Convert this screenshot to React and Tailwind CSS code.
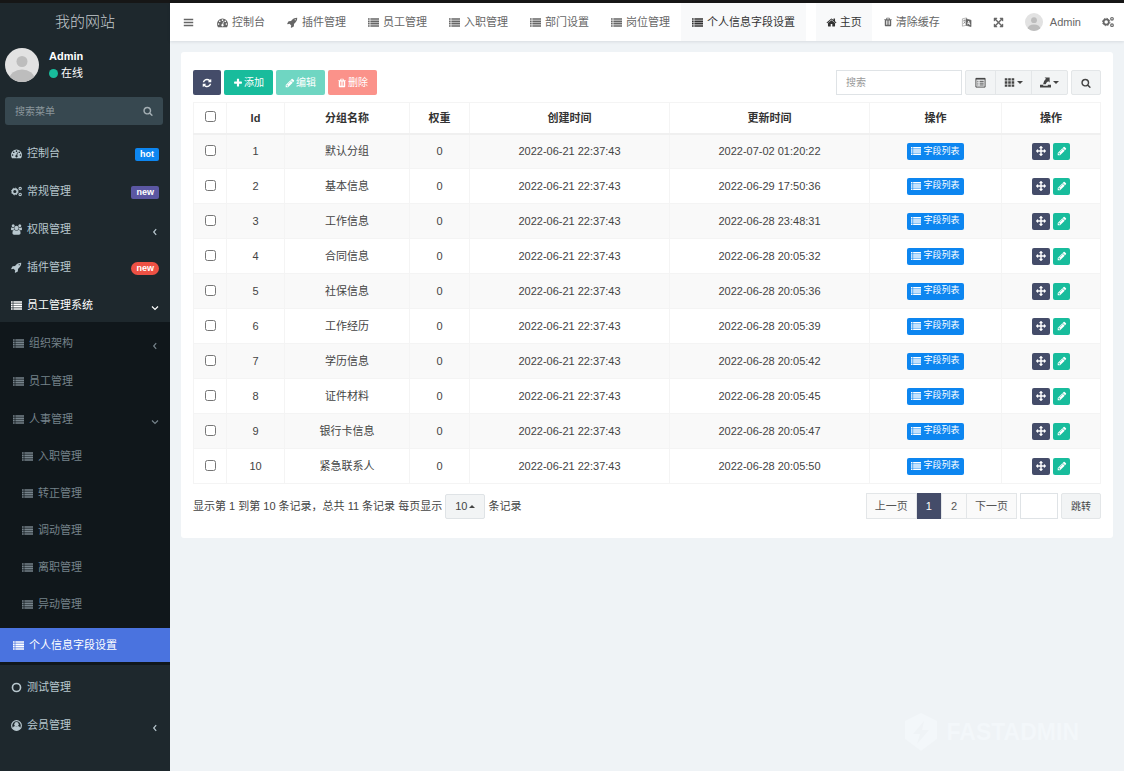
import { useState } from "react";

const PATHS = {
  dashboard:
    "M384 1152q0-53-37.5-90.5t-90.5-37.5-90.5 37.5-37.5 90.5 37.5 90.5 90.5 37.5 90.5-37.5 37.5-90.5zm192-448q0-53-37.5-90.5t-90.5-37.5-90.5 37.5-37.5 90.5 37.5 90.5 90.5 37.5 90.5-37.5 37.5-90.5zm428 481l101-382q6-26-7.5-48.5t-38.5-29.5-48 6.5-30 39.5l-101 382q-60 5-107 43.5t-63 98.5q-20 77 20 146t117 89 146-20 89-117q16-60-6-117t-72-91zm660-33q0-53-37.5-90.5t-90.5-37.5-90.5 37.5-37.5 90.5 37.5 90.5 90.5 37.5 90.5-37.5 37.5-90.5zm-640-640q0-53-37.5-90.5t-90.5-37.5-90.5 37.5-37.5 90.5 37.5 90.5 90.5 37.5 90.5-37.5 37.5-90.5zm448 192q0-53-37.5-90.5t-90.5-37.5-90.5 37.5-37.5 90.5 37.5 90.5 90.5 37.5 90.5-37.5 37.5-90.5zm320 448q0 261-141 483-19 29-54 29h-1402q-35 0-54-29-141-221-141-483 0-182 71-348t191-286 286-191 348-71 348 71 286 191 191 286 71 348z",
  rocket:
    "M1440 448q0-40-28-68t-68-28-68 28-28 68 28 68 68 28 68-28 28-68zm224-288q0 249-75.5 430.5t-253.5 360.5q-81 80-195 176l-20 379q-2 16-16 26l-384 224q-7 4-16 4-12 0-23-9l-64-64q-13-14-8-32l85-276-281-281-276 85q-3 1-9 1-14 0-23-9l-64-64q-17-19-5-39l224-384q10-14 26-16l379-20q96-114 176-195 188-187 358-258t431-71q14 0 24 9.5t10 22.5z",
  list: "M0 192h272v272H0zM384 192h1408v272H384zM0 572h272v272H0zM384 572h1408v272H384zM0 952h272v272H0zM384 952h1408v272H384zM0 1332h272v272H0zM384 1332h1408v272H384z",
  bars: "M128 280h1536v256H128zM128 768h1536v256H128zM128 1256h1536v256H128z",
  pencil:
    "M491 1536l91-91-235-235-91 91v107h128v128h107zm523-928q0-22-22-22-10 0-17 7l-542 542q-7 7-7 17 0 22 22 22 10 0 17-7l542-542q7-7 7-17zm-54-192l416 416-832 832h-416v-416zm683 96q0 53-37 90l-166 166-416-416 166-165q36-38 90-38 53 0 91 38l235 234q37 39 37 91z",
  plus: "M1600 736v192q0 40-28 68t-68 28h-416v416q0 40-28 68t-68 28h-192q-40 0-68-28t-28-68v-416h-416q-40 0-68-28t-28-68v-192q0-40 28-68t68-28h416v-416q0-40 28-68t68-28h192q40 0 68 28t28 68v416h416q40 0 68 28t28 68z",
  refresh:
    "M1639 1056q0 5-1 7-64 268-268 434.5t-478 166.5q-146 0-282.5-55t-243.5-157l-129 129q-19 19-45 19t-45-19-19-45v-448q0-26 19-45t45-19h448q26 0 45 19t19 45-19 45l-137 137q71 66 161 102t187 36q134 0 250-65t186-179q11-17 53-117 8-23 30-23h192q13 0 22.5 9.5t9.5 22.5zm25-800v448q0 26-19 45t-45 19h-448q-26 0-45-19t-19-45 19-45l138-138q-148-137-349-137-134 0-250 65t-186 179q-11 17-53 117-8 23-30 23h-199q-13 0-22.5-9.5t-9.5-22.5v-7q65-268 270-434.5t480-166.5q146 0 284 55.5t245 156.5l130-129q19-19 45-19t45 19 19 45z",
  search:
    "M1216 832q0-185-131.5-316.5t-316.5-131.5-316.5 131.5-131.5 316.5 131.5 316.5 316.5 131.5 316.5-131.5 131.5-316.5zm512 832q0 52-38 90t-90 38q-54 0-90-38l-343-342q-179 124-399 124-143 0-273.5-55.5t-225-150-150-225-55.5-273.5 55.5-273.5 150-225 225-150 273.5-55.5 273.5 55.5 225 150 150 225 55.5 273.5q0 220-124 399l343 343q37 37 37 90z",
  home: "M1472 992v480q0 26-19 45t-45 19h-384v-384h-256v384h-384q-26 0-45-19t-19-45v-480q0-1 .5-3t.5-3l575-474 575 474q1 2 1 6zm223-69l-62 74q-8 9-21 11h-3q-13 0-21-7l-692-577-692 577q-12 8-24 7-13-2-21-11l-62-74q-8-10-7-23.5t11-21.5l719-599q32-26 76-26t76 26l244 204v-195q0-14 9-23t23-9h192q14 0 23 9t9 23v408l219 182q10 8 11 21.5t-7 23.5z",
  trash:
    "M704 1376v-704q0-14-9-23t-23-9h-64q-14 0-23 9t-9 23v704q0 14 9 23t23 9h64q14 0 23-9t9-23zm256 0v-704q0-14-9-23t-23-9h-64q-14 0-23 9t-9 23v704q0 14 9 23t23 9h64q14 0 23-9t9-23zm256 0v-704q0-14-9-23t-23-9h-64q-14 0-23 9t-9 23v704q0 14 9 23t23 9h64q14 0 23-9t9-23zm-544-992h448l-48-117q-7-9-17-11h-317q-10 2-17 11zm928 32v64q0 14-9 23t-23 9h-96v948q0 83-47 143.5t-113 60.5h-832q-66 0-113-58.5t-47-141.5v-952h-96q-14 0-23-9t-9-23v-64q0-14 9-23t23-9h309l70-167q15-37 54-63t79-26h320q40 0 79 26t54 63l70 167h309q14 0 23 9t9 23z",
  arrows:
    "M1792 896q0 26-19 45l-256 256q-19 19-45 19t-45-19-19-45v-128h-384v384h128q26 0 45 19t19 45-19 45l-256 256q-19 19-45 19t-45-19l-256-256q-19-19-19-45t19-45 45-19h128v-384h-384v128q0 26-19 45t-45 19-45-19l-256-256q-19-19-19-45t19-45l256-256q19-19 45-19t45 19 19 45v128h384v-384h-128q-26 0-45-19t-19-45 19-45l256-256q19-19 45-19t45 19l256 256q19 19 19 45t-19 45-45 19h-128v384h384v-128q0-26 19-45t45-19 45 19l256 256q19 19 19 45z",
  expand:
    "M1411 541l-355 355 355 355 144-144q29-31 70-14 39 17 39 59v448q0 26-19 45t-45 19h-448q-42 0-59-40-17-39 14-69l144-144-355-355-355 355 144 144q31 30 14 69-17 40-59 40h-448q-26 0-45-19t-19-45v-448q0-42 40-59 39-17 69 14l144 144 355-355-355-355-144 144q-19 19-45 19-12 0-24-5-40-17-40-59v-448q0-26 19-45t45-19h448q42 0 59 40 17 39-14 69l-144 144 355 355 355-355-144-144q-31-30-14-69 17-40 59-40h448q26 0 45 19t19 45v448q0 42-39 59-13 5-25 5-26 0-45-19z",
  grid: "M128 192h420v380H128zM686 192h420v380H686zM1244 192h420v380h-420zM128 706h420v380H128zM686 706h420v380H686zM1244 706h420v380h-420zM128 1220h420v380H128zM686 1220h420v380H686zM1244 1220h420v380h-420z",
};

const Icon = ({ name, className = "size-[11px]" }) => {
  if (name === "cogs") {
    return (
      <svg viewBox="0 0 12 12" fill="none" stroke="currentColor" className={`shrink-0 ${className}`}>
        <circle cx="4.2" cy="6" r="2.6" strokeWidth="1.7" />
        <circle cx="4.2" cy="6" r="3.7" strokeWidth="1" strokeDasharray="1.45 1.45" />
        <circle cx="10" cy="2.800" r="1.300" strokeWidth="1.200" />
        <circle cx="10" cy="9.200" r="1.300" strokeWidth="1.200" />
      </svg>
    );
  }
  if (name === "group") {
    return (
      <svg viewBox="0 0 1920 1792" fill="currentColor" className={`shrink-0 ${className}`}>
        <path d="M593 896q-162 5-265 128h-134q-82 0-138-40.5t-56-118.5q0-353 124-353 6 0 43.5 21t97.500 42.500 119 21.500q67 0 133-23-5 37-5 66 0 139 81 256zm1071 637q0 120-73 189.500t-194 69.500h-874q-121 0-194-69.500t-73-189.500q0-53 3.500-103.500t14-109 26.500-108.500 43-97.500 62-81 85.500-53.500 111.500-20q10 0 43 21.500t73 48 107 48 135 21.500 135-21.500 107-48 73-48 43-21.500q61 0 111.500 20t85.500 53.500 62 81 43 97.500 26.500 108.500 14 109 3.500 103.500zm-1024-1277q0 106-75 181t-181 75-181-75-75-181 75-181 181-75 181 75 75 181zm704 384q0 159-112.500 271.500t-271.500 112.500-271.500-112.500-112.500-271.500 112.500-271.500 271.500-112.500 271.500 112.500 112.500 271.500zm576 225q0 78-56 118.500t-138 40.500h-134q-103-123-265-128 81-117 81-256 0-29-5-66 66 23 133 23 59 0 119-21.500t97.500-42.500 43.500-21q124 0 124 353zm-128-609q0 106-75 181t-181 75-181-75-75-181 75-181 181-75 181 75 75 181z" />
      </svg>
    );
  }
  if (name === "circle") {
    return (
      <svg viewBox="0 0 12 12" className={`shrink-0 ${className}`}>
        <circle cx="6" cy="6" r="4.4" fill="none" stroke="currentColor" strokeWidth="1.8" />
      </svg>
    );
  }
  if (name === "user") {
    return (
      <svg viewBox="0 0 12 12" className={`shrink-0 ${className}`}>
        <circle cx="6" cy="6" r="5.3" fill="none" stroke="currentColor" strokeWidth="1.3" />
        <circle cx="6" cy="4.7" r="2.4" fill="currentColor" />
        <path d="M1.800 9.200C2.300 7.400 3.600 6.700 4.400 6.600q1.600 1 3.200 0C8.400 6.700 9.700 7.400 10.200 9.200Q8.400 11.200 6 11.200T1.800 9.200z" fill="currentColor" />
      </svg>
    );
  }
  if (name === "language") {
    return (
      <svg viewBox="0 0 12 12" fill="none" stroke="currentColor" className={`shrink-0 ${className}`}>
        <path d="M6 9L1.500 10V2L6 1z" strokeWidth=".5" />
        <path d="M2.500 4l2.500-.5M3.600 2.800v1.200M4.700 4q-.6 2.500-2.200 3.600M2.800 5.200l2 1.600" strokeWidth=".6" />
        <path d="M5.500 2L11 3.500v7L5.500 9z" fill="currentColor" strokeWidth=".6" />
        <path d="M7.200 8l1.100-3.600 1.400 4.300M7.600 7l1.700.4" stroke="#fff" strokeWidth=".9" />
      </svg>
    );
  }
  if (name === "columns") {
    return (
      <svg viewBox="0 0 12 12" fill="none" stroke="currentColor" className={`shrink-0 ${className}`}>
        <path d="M1 1.500h10v9.500H1z" strokeWidth="1" />
        <path d="M1 2h10" strokeWidth="1.600" />
        <path d="M2.500 4.700h1.200M2.500 6.700h1.200M2.500 8.700h1.200M5 4.700h4.500M5 6.700h4.500M5 8.700h4.500" strokeWidth="1" />
      </svg>
    );
  }
  if (name === "export") {
    return (
      <svg viewBox="0 0 12 12" fill="currentColor" className={`shrink-0 ${className}`}>
        <path d="M0 8.500h3.500v1h5v-1H12v3H0z" />
        <path d="M5 .5h5.500V6L9 4.600Q6.800 5.800 6.300 8H3.400Q3.800 4.200 6.500 2z" />
      </svg>
    );
  }
  return (
    <svg viewBox="0 0 1792 1792" fill="currentColor" className={`shrink-0 ${className}`}>
      <path d={PATHS[name]} />
    </svg>
  );
};

const Caret = ({ up }) => (
  <svg viewBox="0 0 6 3" fill="currentColor" className="h-[3px] w-[6px] shrink-0">
    <path d={up ? "M0 3l3-3 3 3z" : "M0 0h6L3 3z"} />
  </svg>
);

const Chevron = ({ down }) => (
  <svg
    viewBox="0 0 8 8"
    fill="none"
    stroke="currentColor"
    strokeWidth="1.2"
    className="mt-[5px] ml-auto size-2 shrink-0"
  >
    <path d={down ? "M1 2.500l3 3 3-3" : "M5.200 1.200l-2.500 2.800 2.500 2.800"} />
  </svg>
);

const Avatar = ({ className }) => (
  <svg viewBox="0 0 34 34" className={`shrink-0 ${className}`}>
    <clipPath id="avatar-clip">
      <circle cx="17" cy="17" r="17" />
    </clipPath>
    <g clipPath="url(#avatar-clip)">
      <path d="M0 0h34v34H0z" fill="#e2e2e2" />
      <circle cx="17" cy="13.500" r="5.500" fill="#bdbdbd" />
      <ellipse cx="17" cy="31" rx="12.500" ry="9.500" fill="#bdbdbd" />
    </g>
  </svg>
);

const BADGES = {
  hot: { text: "hot", style: "bg-[#0d86f0] rounded-[2px] px-[5px]" },
  fresh: { text: "new", style: "bg-[#5b57a2] rounded-[2px] px-[5px]" },
  alert: { text: "new", style: "bg-[#ed5144] rounded-full px-[5px]" },
};

const mainMenu = [
  { icon: "dashboard", label: "控制台", badge: "hot" },
  { icon: "cogs", label: "常规管理", badge: "fresh" },
  { icon: "group", label: "权限管理", arrow: "left" },
  { icon: "rocket", label: "插件管理", badge: "alert" },
  { icon: "list", label: "员工管理系统", arrow: "down", open: true },
];

const subMenu = [
  { label: "组织架构", arrow: "left" },
  { label: "员工管理" },
  { label: "人事管理", arrow: "down" },
];

const hrMenu = ["入职管理", "转正管理", "调动管理", "离职管理", "异动管理"];

const bottomMenu = [
  { icon: "circle", label: "测试管理" },
  { icon: "user", label: "会员管理", arrow: "left" },
];

const tabs = [
  { icon: "dashboard", label: "控制台" },
  { icon: "rocket", label: "插件管理" },
  { icon: "list", label: "员工管理" },
  { icon: "list", label: "入职管理" },
  { icon: "list", label: "部门设置" },
  { icon: "list", label: "岗位管理" },
  { icon: "list", label: "个人信息字段设置", active: true },
];

const rows = [
  { id: 1, name: "默认分组", updated: "2022-07-02 01:20:22" },
  { id: 2, name: "基本信息", updated: "2022-06-29 17:50:36" },
  { id: 3, name: "工作信息", updated: "2022-06-28 23:48:31" },
  { id: 4, name: "合同信息", updated: "2022-06-28 20:05:32" },
  { id: 5, name: "社保信息", updated: "2022-06-28 20:05:36" },
  { id: 6, name: "工作经历", updated: "2022-06-28 20:05:39" },
  { id: 7, name: "学历信息", updated: "2022-06-28 20:05:42" },
  { id: 8, name: "证件材料", updated: "2022-06-28 20:05:45" },
  { id: 9, name: "银行卡信息", updated: "2022-06-28 20:05:47" },
  { id: 10, name: "紧急联系人", updated: "2022-06-28 20:05:50" },
];

const MenuItem = ({ item }) => {
  const badge = BADGES[item.badge];
  return (
    <li>
      <a
        href="#"
        className={`flex h-[34px] items-center px-[11px] ${
          item.open ? "text-white" : "text-[#b8c7ce]"
        }`}
      >
        <Icon name={item.icon} />
        <span className="ml-[5px]">{item.label}</span>
        {badge && (
          <span
            className={`mt-[2px] ml-auto h-[13px] text-[9px] leading-[13px] font-bold text-white ${badge.style}`}
          >
            {badge.text}
          </span>
        )}
        {item.arrow && <Chevron down={item.arrow === "down"} />}
      </a>
    </li>
  );
};

const Sidebar = () => (
  <aside className="w-[170px] shrink-0 bg-[#1e282d] text-[11px]">
    <a
      href="#"
      className="flex h-[38px] items-center justify-center text-[15px] font-light text-[#c3cacd]"
    >
      我的网站
    </a>
    <div className="flex items-center gap-[10px] px-[5px] pt-[7px]">
      <Avatar className="size-[34px]" />
      <div className="leading-[17px] text-white">
        <p className="font-bold">Admin</p>
        <a href="#" className="flex items-center gap-[3px]">
          <span className="size-[9px] rounded-full bg-[#18bc9c]"></span>
          在线
        </a>
      </div>
    </div>
    <form className="mr-[7px] ml-[5px] mt-[15px] flex h-7 items-center rounded-[3px] bg-[#374850] px-[10px]">
      <input
        type="text"
        aria-label="搜索菜单"
        placeholder="搜索菜单"
        className="min-w-0 flex-1 bg-transparent text-[10px] text-white outline-none placeholder:text-[#8b979c]"
      />
      <button type="button" aria-label="搜索" className="text-[#a3aeb3]">
        <Icon name="search" className="size-[10px]" />
      </button>
    </form>

    <ul className="mt-[11px] space-y-1">
      {mainMenu.map((item) => (
        <MenuItem key={item.label} item={item} />
      ))}
    </ul>

    {/* 员工管理系统的子菜单 */}
    <ul className="bg-[#10171b] pt-[2px] pb-[3px] text-[#75828a]">
      {subMenu.map((item) => (
        <li key={item.label}>
          <a href="#" className="flex h-[38px] items-center pr-[11px] pl-[13px]">
            <Icon name="list" />
            <span className="ml-[5px]">{item.label}</span>
            {item.arrow && <Chevron down={item.arrow === "down"} />}
          </a>
        </li>
      ))}
      {hrMenu.map((label) => (
        <li key={label}>
          <a href="#" className="flex h-[37px] items-center pl-[22px]">
            <Icon name="list" />
            <span className="ml-[5px]">{label}</span>
          </a>
        </li>
      ))}
      <li className="pt-[5px]">
        <a
          href="#"
          className="flex h-[34px] items-center bg-[#4a73df] pl-[13px] text-white"
        >
          <Icon name="list" />
          <span className="ml-[5px]">个人信息字段设置</span>
        </a>
      </li>
    </ul>

    <ul className="mt-[5px] space-y-1">
      {bottomMenu.map((item) => (
        <MenuItem key={item.label} item={item} />
      ))}
    </ul>
  </aside>
);

const NavLink = ({ active, label, children }) => (
  <a
    href="#"
    aria-label={label}
    className={`flex h-full items-center gap-[3px] px-[10px] ${
      active ? "bg-[#f8f9fa] text-[#333]" : ""
    }`}
  >
    {children}
  </a>
);

const Navbar = () => (
  <header className="flex h-[38px] items-center bg-white text-[11px] whitespace-nowrap text-[#666] shadow-[0_1px_3px_rgba(0,21,41,0.1)]">
    <button type="button" aria-label="菜单" className="flex h-full w-9 items-center justify-center">
      <Icon name="bars" />
    </button>
    <nav className="flex h-full">
      {tabs.map((tab) => (
        <a
          key={tab.label}
          href="#"
          className={`flex items-center gap-1 px-[11px] ${
            tab.active ? "bg-[#f8f9fa] text-[#333]" : ""
          }`}
        >
          <Icon name={tab.icon} />
          {tab.label}
        </a>
      ))}
    </nav>
    <div className="ml-auto flex h-full gap-px">
      <NavLink active>
        <Icon name="home" />
        主页
      </NavLink>
      <NavLink>
        <Icon name="trash" className="size-[10px]" />
        清除缓存
      </NavLink>
      <NavLink label="语言">
        <Icon name="language" />
      </NavLink>
      <NavLink label="全屏">
        <Icon name="expand" />
      </NavLink>
      <NavLink>
        <Avatar className="mr-1 size-[18px]" />
        Admin
      </NavLink>
      <NavLink label="设置">
        <Icon name="cogs" className="size-3" />
      </NavLink>
    </div>
  </header>
);

const Toolbar = () => (
  <div className="flex items-center justify-between">
    <div className="flex h-[25px] gap-[3px] text-[10px] text-white">
      <button type="button" aria-label="刷新" className="flex items-center rounded-[2px] bg-[#444c69] px-[9px]">
        <Icon name="refresh" className="size-[10px]" />
      </button>
      <button type="button" className="flex items-center gap-px rounded-[2px] bg-[#18bc9c] px-[9px]">
        <Icon name="plus" className="size-[10px]" />
        添加
      </button>
      <button type="button" disabled className="flex items-center gap-px rounded-[2px] bg-[#6fd6c2] px-[9px]">
        <Icon name="pencil" className="size-[10px]" />
        编辑
      </button>
      <button type="button" disabled className="flex items-center gap-px rounded-[2px] bg-[#fb928a] px-[9px]">
        <Icon name="trash" className="size-[10px]" />
        删除
      </button>
    </div>
    <div className="flex h-[25px] gap-[3px] text-[#444]">
      <input
        type="text"
        aria-label="搜索"
        placeholder="搜索"
        className="w-[126px] border border-[#dfe3e6] px-[9px] text-[10px] outline-none placeholder:text-[#999]"
      />
      <div className="flex divide-x divide-[#e3e6e8] rounded-[2px] border border-[#e3e6e8] bg-[#f2f4f5]">
        <button type="button" aria-label="切换" className="flex items-center px-[9px]">
          <Icon name="columns" />
        </button>
        <button type="button" aria-label="列" className="flex items-center gap-[2px] px-2">
          <Icon name="grid" />
          <Caret />
        </button>
        <button type="button" aria-label="导出" className="flex items-center gap-[2px] px-2">
          <Icon name="export" />
          <Caret />
        </button>
      </div>
      <button
        type="button"
        aria-label="普通搜索"
        className="flex items-center rounded-[2px] border border-[#e3e6e8] bg-[#f2f4f5] px-[9px]"
      >
        <Icon name="search" className="size-[10px]" />
      </button>
    </div>
  </div>
);

const GroupTable = () => {
  const [selected, setSelected] = useState([]);
  const allSelected = selected.length === rows.length;

  const toggleRow = (id) => {
    setSelected((current) =>
      current.includes(id) ? current.filter((i) => i !== id) : [...current, id]
    );
  };

  const th = "border border-[#f4f4f4] font-bold text-[#333]";
  const td = "border border-[#f4f4f4]";

  return (
    <table className="mt-[7px] w-full table-fixed border-collapse text-center text-[11px] text-[#444]">
      <thead>
        <tr className="h-[31px] border-b-2 border-[#f0f0f0]">
          <th className={`w-[33px] pb-[2px] ${th}`}>
            <input
              type="checkbox"
              aria-label="全选"
              checked={allSelected}
              onChange={() => setSelected(allSelected ? [] : rows.map((r) => r.id))}
              className="mx-auto block size-[11px]"
            />
          </th>
          <th className={`w-[58px] ${th}`}>Id</th>
          <th className={`w-[125px] ${th}`}>分组名称</th>
          <th className={`w-[60px] ${th}`}>权重</th>
          <th className={th}>创建时间</th>
          <th className={th}>更新时间</th>
          <th className={`w-[132px] ${th}`}>操作</th>
          <th className={`w-[99px] ${th}`}>操作</th>
        </tr>
      </thead>
      <tbody>
        {rows.map((row) => (
          <tr key={row.id} className="h-[35px] odd:bg-[#f9f9f9]">
            <td className={`pb-[2px] ${td}`}>
              <input
                type="checkbox"
                aria-label={row.name}
                checked={selected.includes(row.id)}
                onChange={() => toggleRow(row.id)}
                className="mx-auto block size-[11px]"
              />
            </td>
            <td className={td}>{row.id}</td>
            <td className={td}>{row.name}</td>
            <td className={td}>0</td>
            <td className={td}>2022-06-21 22:37:43</td>
            <td className={td}>{row.updated}</td>
            <td className={td}>
              <a
                href="#"
                className="mx-auto flex h-[17px] w-fit items-center gap-[2px] rounded-[2px] bg-[#0d86f0] px-1 text-[9px] text-white"
              >
                <Icon name="list" className="size-[10px]" />
                字段列表
              </a>
            </td>
            <td className={td}>
              <div className="flex justify-center gap-[3px] text-white">
                <button
                  type="button"
                  aria-label="排序"
                  className="flex h-[17px] w-[18px] items-center justify-center rounded-[2px] bg-[#444c69]"
                >
                  <Icon name="arrows" className="size-[10px]" />
                </button>
                <button
                  type="button"
                  aria-label="编辑"
                  className="flex h-[17px] w-[17px] items-center justify-center rounded-[2px] bg-[#18bc9c]"
                >
                  <Icon name="pencil" className="size-[10px]" />
                </button>
              </div>
            </td>
          </tr>
        ))}
      </tbody>
    </table>
  );
};

const Pagination = () => (
  <div className="mt-[9px] flex items-center justify-between text-[11px] text-[#444]">
    <div className="flex items-center gap-[3px]">
      <span>显示第 1 到第 10 条记录，总共 11 条记录 每页显示</span>
      <button
        type="button"
        className="flex h-[25px] items-center gap-[2px] rounded-[2px] border border-[#dfe3e6] bg-[#f2f4f5] px-[9px]"
      >
        10
        <Caret up />
      </button>
      <span>条记录</span>
    </div>
    <div className="flex h-[26px] items-stretch">
      <div className="flex divide-x divide-[#e3e6e8] border border-[#e3e6e8] bg-[#fafafa] text-[#555]">
        <a href="#" className="flex items-center px-[8px]">
          上一页
        </a>
        <a href="#" className="-my-px flex items-center bg-[#444c69] px-[9px] text-white">
          1
        </a>
        <a href="#" className="flex items-center px-[9px]">
          2
        </a>
        <a href="#" className="flex items-center px-[8px]">
          下一页
        </a>
      </div>
      <input
        type="text"
        aria-label="页码"
        className="ml-[3px] w-[38px] border border-[#dfe3e6] bg-white px-1 outline-none"
      />
      <button
        type="button"
        className="ml-[3px] rounded-[2px] border border-[#e3e6e8] bg-[#f2f4f5] px-[9px] text-[10px]"
      >
        跳转
      </button>
    </div>
  </div>
);

const Watermark = () => (
  <div className="mt-auto mr-[45px] mb-5 flex items-center gap-[10px] self-end text-[23px] font-bold text-[#f3f7fa]">
    <svg viewBox="0 0 32 38" className="h-[38px] w-8">
      <path d="M16 0l16 8v18L16 38 0 26V8z" fill="currentColor" />
      <path d="M19 8L8 21h7l-3 10 12-14h-7z" fill="#eff3f6" />
    </svg>
    FASTADMIN
  </div>
);

const App = () => {
  return (
    <div className="flex min-h-screen flex-col border-t-[3px] border-[#161616] bg-[#eff3f6] font-['Liberation_Sans','Noto_Sans_CJK_SC',sans-serif]">
      <div className="flex flex-1">
        <Sidebar />
        <div className="flex min-w-0 flex-1 flex-col">
          <Navbar />
          <main className="mx-[11px] mt-[11px] rounded-[3px] bg-white px-3 pt-[18px] pb-[19px]">
            <Toolbar />
            <GroupTable />
            <Pagination />
          </main>
          <Watermark />
        </div>
      </div>
    </div>
  );
};

export default App;
